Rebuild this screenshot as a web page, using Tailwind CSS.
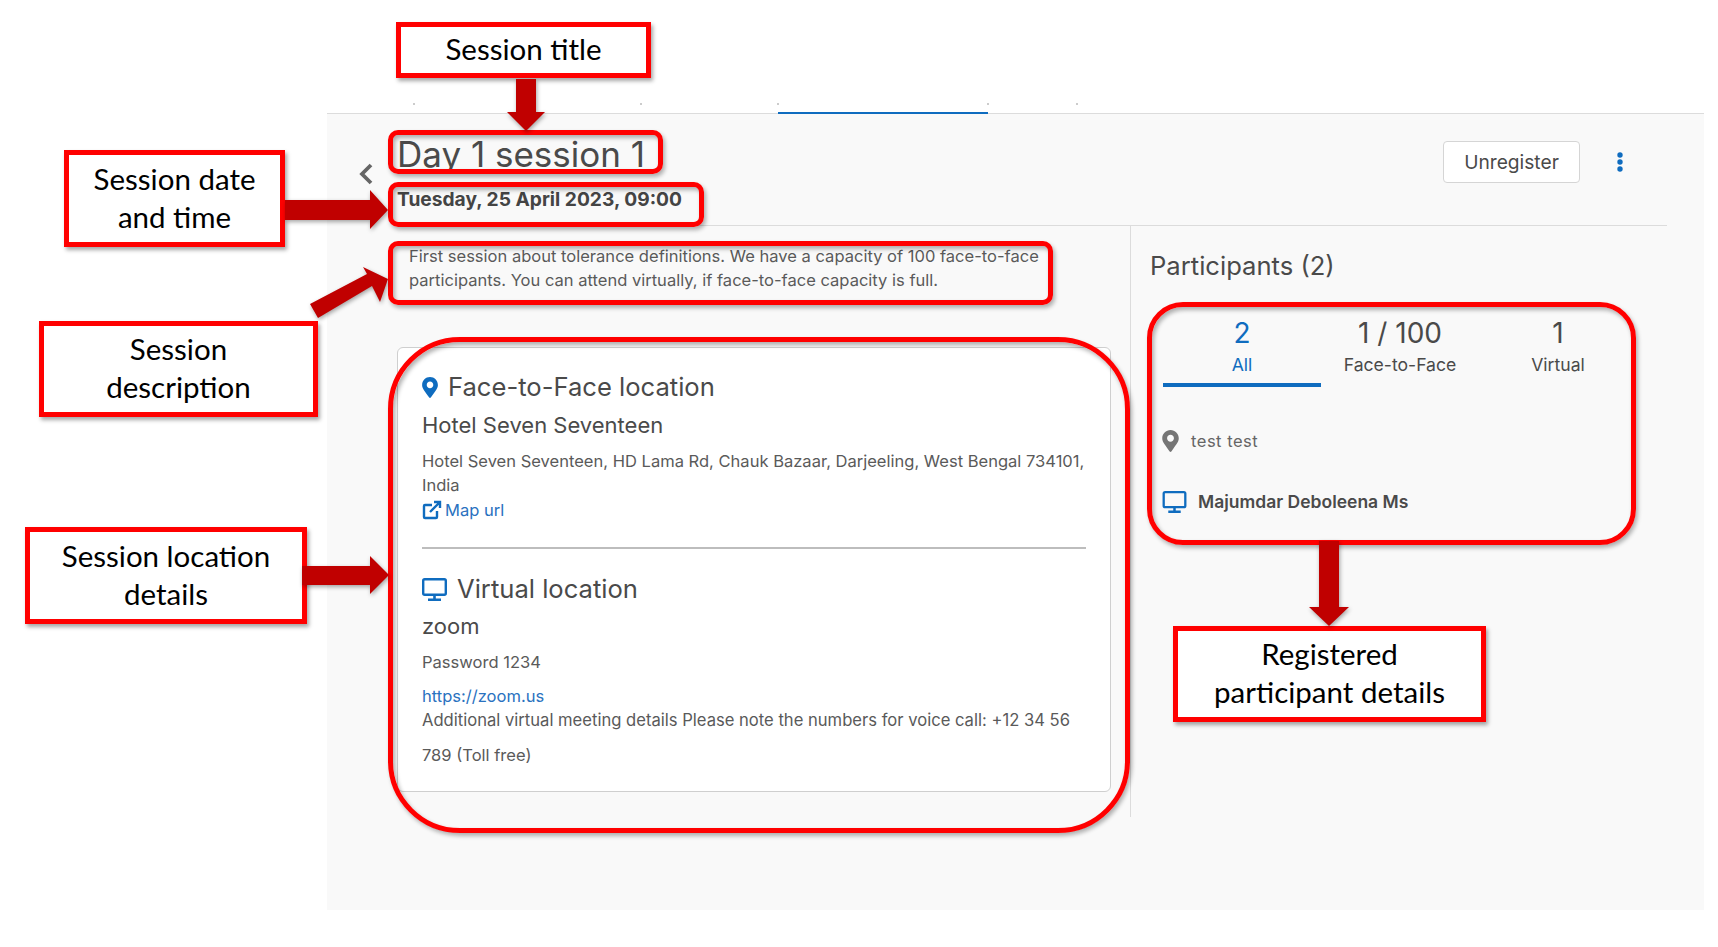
<!DOCTYPE html>
<html>
<head>
<meta charset="utf-8">
<script src="https://cdn.jsdelivr.net/npm/@tailwindcss/browser@4"></script>
</head>
<body class="bg-white">
<div class="relative w-[1718px] h-[947px] overflow-hidden bg-white font-['Inter',sans-serif] text-[#4a4a4a]">
  <div class="pl-[327px] pr-[14px]">
    <div class="h-[113px] relative">
      <div class="absolute left-[451px] top-[112px] h-[2px] w-[210px] bg-[#0f6cbf]"></div>
      <div class="absolute left-[86px] top-[103px] size-[2px] bg-[#ccc]"></div>
      <div class="absolute left-[313px] top-[103px] size-[2px] bg-[#ccc]"></div>
      <div class="absolute left-[450px] top-[103px] size-[2px] bg-[#ccc]"></div>
      <div class="absolute left-[660px] top-[103px] size-[2px] bg-[#ccc]"></div>
      <div class="absolute left-[749px] top-[103px] size-[2px] bg-[#ccc]"></div>
    </div>
    <main class="h-[797px] border-t border-[#dcdcdc] bg-[#f9f9f9] pl-[70px] pr-[37px]">
      <header class="flex h-[112px] items-start justify-between border-b border-[#dcdcdc]">
        <div class="flex">
          <div class="-ml-[40px] w-[40px] pt-[49px] pl-[1px]">
            <svg class="h-[22px] w-[16px]" viewBox="0 0 16 22" fill="none" stroke="#666" stroke-width="3.8"><polyline points="13,2 4,11 13,20"/></svg>
          </div>
          <div>
            <h1 class="pt-[18px] text-[35px] leading-[44px] font-normal text-[#4a4a4a]">Day 1 session 1</h1>
            <p class="mt-[10px] text-[19.2px] leading-[26px] font-bold text-[#444]">Tuesday, 25 April 2023, 09:00</p>
          </div>
        </div>
        <div class="flex items-center pt-[27px]">
          <button class="h-[42px] w-[137px] rounded-[4px] border border-[#d5d5d5] bg-white text-[19.2px] text-[#4a4a4a]">Unregister</button>
          <svg class="ml-[37px] mr-[44px] h-[20px] w-[6px]" viewBox="0 0 6 20" fill="#0f6cbf"><circle cx="3" cy="3" r="2.7"/><circle cx="3" cy="10" r="2.7"/><circle cx="3" cy="17" r="2.7"/></svg>
        </div>
      </header>
      <div class="flex">
        <section class="h-[591px] w-[734px] border-r border-[#dcdcdc]">
          <p class="pl-[12px] pt-[18px] text-[16.55px] leading-[24px] text-[#5a5a5a]">First session about tolerance definitions. We have a capacity of 100 face-to-face<br>participants. You can attend virtually, if face-to-face capacity is full.</p>
          <div class="mt-[55px] h-[445px] w-[714px] rounded-[6px] border border-[#cfcfcf] bg-white pl-[24px] pr-[24px] pt-[21px]">
            <div class="flex h-[36px] items-center gap-[10px]">
              <svg class="h-[21px] w-[16px]" viewBox="0 0 384 512" fill="#0f6cbf"><path d="M172.268 501.67C26.97 291.031 0 262.429 0 192 0 85.961 85.961 0 192 0s192 85.961 192 192c0 70.429-26.97 99.031-172.268 309.67-9.535 13.774-29.93 13.773-39.464 0zM192 272c44.183 0 80-35.817 80-80s-35.817-80-80-80-80 35.817-80 80 35.817 80 80 80z"/></svg>
              <h2 class="text-[25.6px] leading-[36px] font-normal">Face-to-Face location</h2>
            </div>
            <h3 class="mt-[3px] text-[22px] leading-[34px] font-normal">Hotel Seven Seventeen</h3>
            <p class="mt-[7px] text-[16.55px] leading-[24px] text-[#5a5a5a]">Hotel Seven Seventeen, HD Lama Rd, Chauk Bazaar, Darjeeling, West Bengal 734101,<br>India</p>
            <a class="mt-[1px] flex h-[24px] items-center gap-[3px] text-[16.55px] text-[#2a72c0]">
              <svg class="h-[20px] w-[20px]" viewBox="0 0 20 20" fill="none" stroke="#0f6cbf" stroke-width="2.4"><path d="M15 11v6a1 1 0 0 1-1 1H3a1 1 0 0 1-1-1V6a1 1 0 0 1 1-1h7"/><path d="M8 12 L18 2 M12 2h6v6"/></svg>
              Map url
            </a>
            <div class="mt-[25px] w-[664px] border-t-2 border-[#bdbdbd]"></div>
            <div class="mt-[22px] flex h-[36px] items-center gap-[10px]">
              <svg class="h-[23px] w-[25px]" viewBox="0 0 25 23" fill="none" stroke="#0f6cbf"><rect x="1.2" y="1.2" width="22.6" height="15.6" rx="1.5" stroke-width="2.4"/><path d="M12.5 17v4M6 21.8h13" stroke-width="2.6"/></svg>
              <h2 class="text-[25.6px] leading-[36px] font-normal">Virtual location</h2>
            </div>
            <h3 class="mt-[2px] text-[22px] leading-[34px] font-normal">zoom</h3>
            <p class="mt-[7px] text-[16.55px] leading-[24px] text-[#5a5a5a]">Password 1234</p>
            <a class="mt-[10px] block text-[16.55px] leading-[24px] text-[#2a72c0]">https://zoom.us</a>
            <p class="text-[16.6px] leading-[24px] text-[#5a5a5a]">Additional virtual meeting details Please note the numbers for voice call: +12 34 56</p>
            <p class="mt-[11px] text-[16.55px] leading-[24px] text-[#5a5a5a]">789 (Toll free)</p>
          </div>
        </section>
        <aside class="flex-1 pl-[19px]">
          <h2 class="pt-[22px] text-[25.6px] leading-[36px] font-normal">Participants (2)</h2>
          <div class="ml-[13px] mt-[31px] grid w-[474px] grid-cols-3 text-center">
            <div class="h-[68px] box-content border-b-[4px] border-[#0f6cbf] text-[#0f6cbf]">
              <div class="text-[28px] leading-[36px]">2</div>
              <div class="mt-[3px] text-[17.6px] leading-[22px]">All</div>
            </div>
            <div><div class="text-[28px] leading-[36px]">1 / 100</div><div class="mt-[3px] text-[17.6px] leading-[22px]">Face-to-Face</div></div>
            <div><div class="text-[28px] leading-[36px]">1</div><div class="mt-[3px] text-[17.6px] leading-[22px]">Virtual</div></div>
          </div>
          <div class="ml-[13px] mt-[40px] flex h-[28px] items-center gap-[12px]">
            <svg class="ml-[-1px] h-[22px] w-[17px]" viewBox="0 0 384 512" fill="#757575"><path d="M172.268 501.67C26.97 291.031 0 262.429 0 192 0 85.961 85.961 0 192 0s192 85.961 192 192c0 70.429-26.97 99.031-172.268 309.67-9.535 13.774-29.93 13.773-39.464 0zM192 272c44.183 0 80-35.817 80-80s-35.817-80-80-80-80 35.817-80 80 35.817 80 80 80z"/></svg>
            <span class="text-[16.55px] tracking-[0.5px] text-[#666]">test test</span>
          </div>
          <div class="ml-[13px] mt-[33px] flex h-[28px] items-center gap-[11px]">
            <svg class="-ml-[1px] h-[22px] w-[25px]" viewBox="0 0 25 23" fill="none" stroke="#0f6cbf"><rect x="1.2" y="1.2" width="22.6" height="15.6" rx="1.5" stroke-width="2.4"/><path d="M12.5 17v4M6 21.8h13" stroke-width="2.6"/></svg>
            <span class="text-[17.5px] font-semibold text-[#4a4a4a]">Majumdar Deboleena Ms</span>
          </div>
        </aside>
      </div>
    </main>
  </div>

  <!-- annotation outlines -->
  <div class="absolute left-[388px] top-[130px] h-[44px] w-[275px] rounded-[10px] border-[5px] border-[#ff0000] shadow-[2px_3px_4px_rgba(0,0,0,.3),inset_2px_3px_4px_rgba(0,0,0,.3)]"></div>
  <div class="absolute left-[388px] top-[182px] h-[45px] w-[316px] rounded-[10px] border-[5px] border-[#ff0000] shadow-[2px_3px_4px_rgba(0,0,0,.3),inset_2px_3px_4px_rgba(0,0,0,.3)]"></div>
  <div class="absolute left-[388px] top-[241px] h-[64px] w-[665px] rounded-[10px] border-[5px] border-[#ff0000] shadow-[2px_3px_4px_rgba(0,0,0,.3),inset_2px_3px_4px_rgba(0,0,0,.3)]"></div>
  <div class="absolute left-[388px] top-[337px] h-[496px] w-[742px] rounded-[72px] border-[5px] border-[#ff0000] shadow-[2px_3px_4px_rgba(0,0,0,.3),inset_2px_3px_4px_rgba(0,0,0,.3)]"></div>
  <div class="absolute left-[1147px] top-[302px] h-[243px] w-[489px] rounded-[36px] border-[5px] border-[#ff0000] shadow-[2px_3px_4px_rgba(0,0,0,.3),inset_2px_3px_4px_rgba(0,0,0,.3)]"></div>

  <!-- callouts -->
  <div class="absolute left-[396px] top-[22px] flex h-[56px] w-[255px] items-center justify-center border-[5px] border-[#ff0000] bg-white pb-[2px] font-['Lato',sans-serif] text-[29.5px] leading-[38px] text-black shadow-[2px_3px_4px_rgba(0,0,0,.35)]">Session title</div>
  <div class="absolute left-[64px] top-[150px] flex h-[97px] w-[221px] items-center justify-center border-[5px] border-[#ff0000] bg-white pb-[2px] text-center font-['Lato',sans-serif] text-[29.5px] leading-[38px] text-black shadow-[2px_3px_4px_rgba(0,0,0,.35)]">Session date<br>and time</div>
  <div class="absolute left-[39px] top-[321px] flex h-[96px] w-[279px] items-center justify-center border-[5px] border-[#ff0000] bg-white pb-[2px] text-center font-['Lato',sans-serif] text-[29.5px] leading-[38px] text-black shadow-[2px_3px_4px_rgba(0,0,0,.35)]">Session<br>description</div>
  <div class="absolute left-[25px] top-[527px] flex h-[97px] w-[282px] items-center justify-center border-[5px] border-[#ff0000] bg-white pb-[2px] text-center font-['Lato',sans-serif] text-[29.5px] leading-[38px] text-black shadow-[2px_3px_4px_rgba(0,0,0,.35)]">Session location<br>details</div>
  <div class="absolute left-[1173px] top-[626px] flex h-[96px] w-[313px] items-center justify-center border-[5px] border-[#ff0000] bg-white pb-[2px] text-center font-['Lato',sans-serif] text-[29.5px] leading-[38px] text-black shadow-[2px_3px_4px_rgba(0,0,0,.35)]">Registered<br>participant details</div>

  <!-- arrows -->
  <svg class="absolute left-0 top-0 h-[947px] w-[1718px] drop-shadow-[1px_2px_2px_rgba(0,0,0,.35)]" viewBox="0 0 1718 947" fill="#c00000">
    <polygon points="516,79 536,79 536,112 545,112 526,131 507,112 516,112"/>
    <polygon points="285,200 370,200 370,190 388,210 370,229 370,220 285,220"/>
    <polygon points="310,304 318,318 372,286 380,302 388,279 363,267 367,274"/>
    <polygon points="302,566 370,566 370,556 389,575 370,594 370,585 302,585"/>
    <polygon points="1319,541 1339,541 1339,607 1349,607 1329,626 1309,607 1319,607"/>
  </svg>
</div>
</body>
</html>
